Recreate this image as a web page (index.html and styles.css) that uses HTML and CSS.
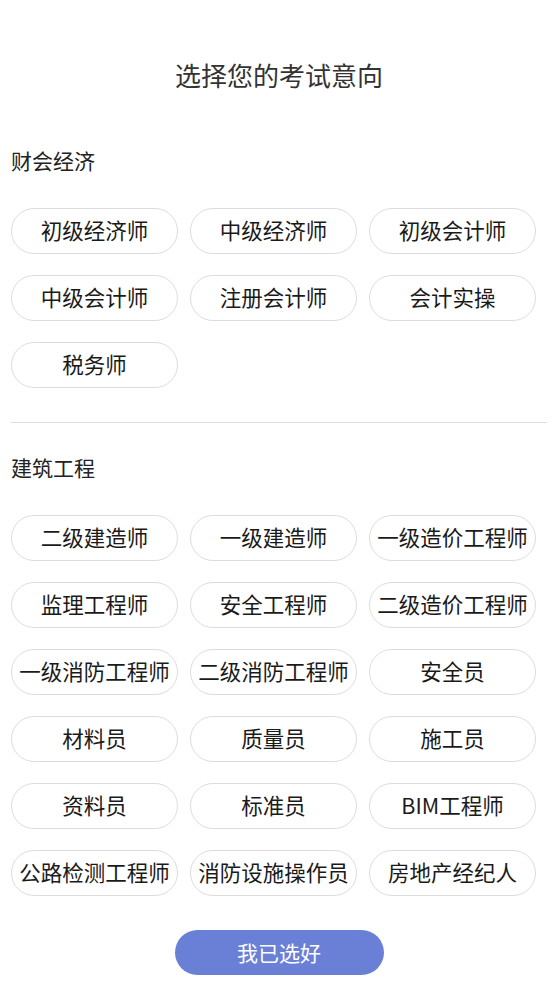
FILE: index.html
```html
<!DOCTYPE html>
<html lang="zh-CN">
<head>
    <meta charset="UTF-8">
    <meta name="viewport" content="width=device-width, initial-scale=1.0">
    <title>选择您的考试意向</title>
    <link rel="stylesheet" href="styles.css">
</head>
<body>
    <div class="page">
        <h2 class="title">选择您的考试意向</h2>

        <div class="group">
            <div class="group-name">财会经济</div>
            <div class="chips">
                <div class="chip">初级经济师</div>
                <div class="chip">中级经济师</div>
                <div class="chip">初级会计师</div>
                <div class="chip">中级会计师</div>
                <div class="chip">注册会计师</div>
                <div class="chip">会计实操</div>
                <div class="chip">税务师</div>
            </div>
        </div>

        <div class="divider"></div>

        <div class="group">
            <div class="group-name">建筑工程</div>
            <div class="chips">
                <div class="chip">二级建造师</div>
                <div class="chip">一级建造师</div>
                <div class="chip">一级造价工程师</div>
                <div class="chip">监理工程师</div>
                <div class="chip">安全工程师</div>
                <div class="chip">二级造价工程师</div>
                <div class="chip">一级消防工程师</div>
                <div class="chip">二级消防工程师</div>
                <div class="chip">安全员</div>
                <div class="chip">材料员</div>
                <div class="chip">质量员</div>
                <div class="chip">施工员</div>
                <div class="chip">资料员</div>
                <div class="chip">标准员</div>
                <div class="chip">BIM工程师</div>
                <div class="chip">公路检测工程师</div>
                <div class="chip">消防设施操作员</div>
                <div class="chip">房地产经纪人</div>
            </div>
        </div>

        <button class="done">我已选好</button>
    </div>
</body>
</html>
```

FILE: styles.css
```css
body {
    margin: 0;
    background: #fff;
    font-family: "Noto Sans CJK SC", "Noto Sans", sans-serif;
    color: #222;
}
.page {
    padding: 0 11px 16px;
    display: flex;
    flex-direction: column;
}
.title {
    margin: 57px 0 0;
    font-size: 26px;
    font-weight: normal;
    line-height: 36px;
    text-align: center;
    color: #333;
}
.group-name {
    font-size: 21px;
    line-height: 26px;
    color: #222;
}
.title + .group .group-name {
    margin-top: 54px;
}
.chips {
    margin-top: 35px;
    display: grid;
    grid-template-columns: repeat(3, 167px);
    column-gap: 12px;
    row-gap: 21px;
}
.chip {
    height: 46px;
    box-sizing: border-box;
    padding-bottom: 3px;
    border: 1px solid #dcdcdc;
    border-radius: 23px;
    display: flex;
    align-items: center;
    justify-content: center;
    font-size: 21.5px;
    color: #1a1a1a;
    white-space: nowrap;
}
.divider {
    margin: 34px 0 31px;
    height: 1px;
    background: #dedede;
    width: 536px;
}
.done {
    align-self: center;
    margin-top: 34px;
    width: 209px;
    height: 45px;
    padding-bottom: 3px;
    border: none;
    border-radius: 23px;
    background-color: #6a7fd6;
    color: #fff;
    font-family: inherit;
    font-size: 21px;
    cursor: pointer;
}
```
